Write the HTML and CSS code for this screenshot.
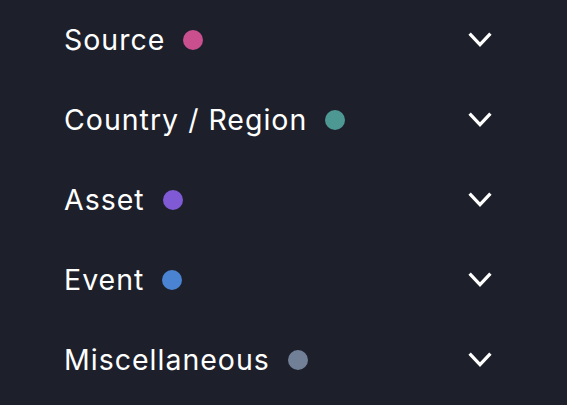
FILE: index.html
```html
<!DOCTYPE html>
<html lang="en">
<head>
<meta charset="utf-8">
<link rel="stylesheet" href="styles.css">
</head>
<body>
<ul class="filters">
  <li class="row">
    <span class="label">Source <span class="dot dot-pink"></span></span>
    <svg class="chev" viewBox="0 0 24 24"><polyline points="1.6,5.6 12,16.6 22.4,5.6"/></svg>
  </li>
  <li class="row">
    <span class="label">Country / Region <span class="dot dot-teal"></span></span>
    <svg class="chev" viewBox="0 0 24 24"><polyline points="1.6,5.6 12,16.6 22.4,5.6"/></svg>
  </li>
  <li class="row">
    <span class="label">Asset <span class="dot dot-purple"></span></span>
    <svg class="chev" viewBox="0 0 24 24"><polyline points="1.6,5.6 12,16.6 22.4,5.6"/></svg>
  </li>
  <li class="row">
    <span class="label">Event <span class="dot dot-blue"></span></span>
    <svg class="chev" viewBox="0 0 24 24"><polyline points="1.6,5.6 12,16.6 22.4,5.6"/></svg>
  </li>
  <li class="row">
    <span class="label">Miscellaneous <span class="dot dot-gray"></span></span>
    <svg class="chev" viewBox="0 0 24 24"><polyline points="1.6,5.6 12,16.6 22.4,5.6"/></svg>
  </li>
</ul>
</body>
</html>
```
FILE: styles.css
```css
html, body {
  margin: 0;
  padding: 0;
  background: #1d202b;
  height: 100%;
  overflow: hidden;
}
.filters {
  list-style: none;
  margin: 0;
  padding: 0 75px 0 64px;
  font-family: Inter, "Noto Sans", sans-serif;
  color: #ffffff;
}
.row {
  height: 80px;
  display: flex;
  align-items: center;
  justify-content: space-between;
}
.label {
  display: flex;
  align-items: center;
  gap: 18px;
  font-size: 28.5px;
  letter-spacing: 1px;
  line-height: 1;
}
.dot {
  width: 20px;
  height: 20px;
  border-radius: 50%;
  display: inline-block;
}
.dot-pink { background: #c94f8e; }
.dot-teal { background: #4e9893; }
.dot-purple { background: #805ad5; }
.dot-blue { background: #4a83d1; }
.dot-gray { background: #718096; }
.chev {
  width: 24px;
  height: 24px;
  fill: none;
  stroke: #ffffff;
  stroke-width: 3.3;
  stroke-linecap: butt;
  stroke-linejoin: miter;
}
```
